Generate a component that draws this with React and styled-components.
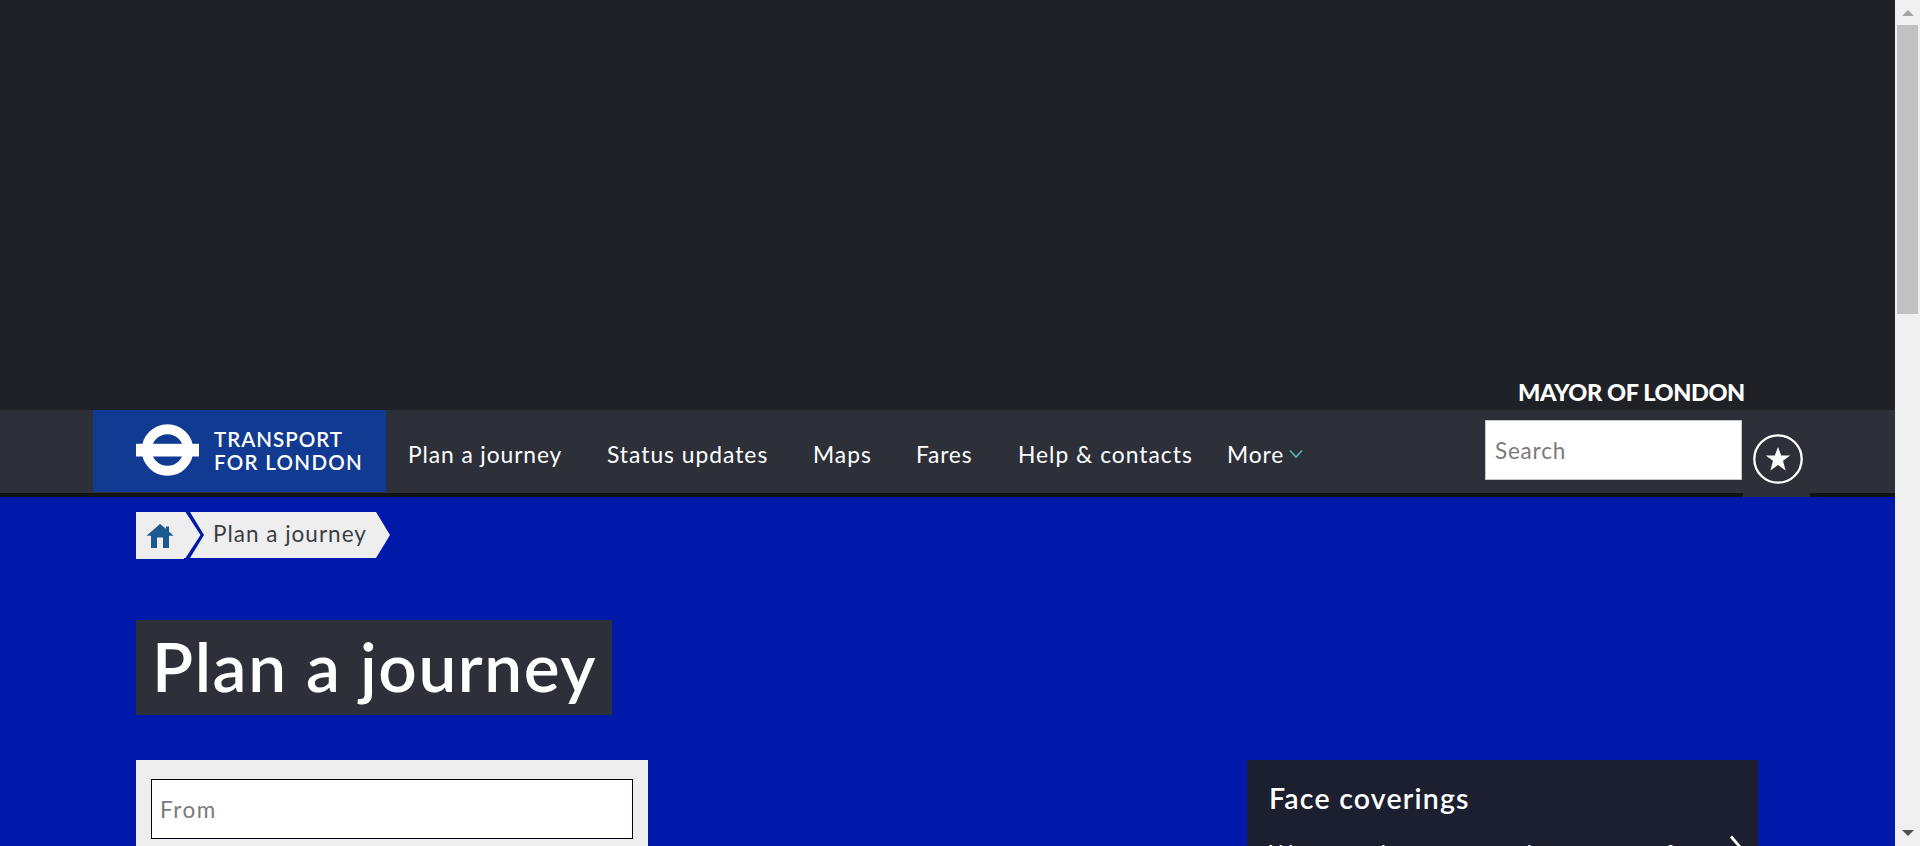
import React from 'react';
import styled, { createGlobalStyle } from 'styled-components';

const Global = createGlobalStyle`
  * { box-sizing: border-box; }
  html, body { margin: 0; height: 846px; overflow: hidden; }
  body { font-family: Lato, "Liberation Sans", sans-serif; background: #0019a8; }
`;

const Screen = styled.div`
  display: flex;
  width: 1920px;
  height: 846px;
  overflow: hidden;
`;
const Page = styled.div`
  width: 1895px;
  height: 846px;
  overflow: hidden;
  background: #0019a8;
`;
const TopArea = styled.div`
  height: 410px;
  background: #202126;
  display: flex;
  justify-content: flex-end;
  align-items: flex-end;
  padding: 0 150px 6px 0;
`;
const Mayor = styled.div`
  width: 227px;
  font-size: 23.5px;
  line-height: 24px;
  font-weight: 900;
  letter-spacing: -0.4px;
  white-space: nowrap;
  color: #fff;
`;
const Header = styled.header`
  display: flex;
  height: 87px;
  padding-left: 93px;
  background: #2d3039;
  border-bottom: 4px solid #131417;
`;
const Brand = styled.a`
  display: flex;
  width: 293px;
  height: 82px;
  padding: 14px 0 0 43px;
  gap: 15px;
  background: #113b92;
`;
const BrandName = styled.div`
  padding-top: 4px;
  color: #fff;
  font-size: 20.5px;
  line-height: 23px;
  font-weight: 600;
  white-space: nowrap;
`;
const Line = styled.span`
  display: block;
  letter-spacing: ${p => p.$track || 0}px;
`;
const Nav = styled.nav`
  display: flex;
  width: 1099px;
  padding: 30px 0 0 22px;
`;
const NavItem = styled.a`
  display: flex;
  align-items: center;
  gap: 5px;
  width: ${p => p.$width}px;
  height: 28px;
  color: #fff;
  font-size: 22.8px;
  letter-spacing: ${p => p.$track || 0}px;
  white-space: nowrap;
`;
const SearchInput = styled.input`
  width: 257px;
  height: 60px;
  margin: 10px 0 0;
  padding: 0 9px 0;
  border: 1px solid #c4c6ca;
  border-radius: 0;
  background: #fff;
  font: 400 22.5px Lato, sans-serif;
  letter-spacing: 0.8px;
  outline: none;
  &::placeholder { color: #7a7a7a; opacity: 1; }
`;
const Favourites = styled.button`
  width: 67px;
  height: 87px;
  margin-left: 1px;
  padding: 23px 0 0 9px;
  border: 0;
  background: #2d3039;
  display: flex;
  align-items: flex-start;
`;
const Main = styled.main`
  padding: 15px 137px 0 136px;
`;
const Crumbs = styled.nav`
  display: flex;
  height: 47px;
`;
const HomeCrumb = styled.a`
  display: block;
  width: 54px;
  height: 47px;
`;
const PageCrumb = styled.span`
  width: 200px;
  height: 46px;
  padding: 8px 0 0 23px;
  background: #eee;
  clip-path: polygon(0 0, 186px 0, 100% 50%, 186px 100%, 0 100%, 14px 50%);
  color: #3a3d45;
  font-size: 22.5px;
  font-weight: 400;
  line-height: 28px;
  letter-spacing: 1px;
  white-space: nowrap;
`;
const Title = styled.h1`
  width: 476px;
  height: 95px;
  margin: 61px 0 45px;
  padding: 0 0 0 16px;
  background: #2d3039;
  color: #fff;
  font-size: 67.5px;
  font-weight: 600;
  line-height: 92px;
  letter-spacing: 1.6px;
  white-space: nowrap;
`;
const Columns = styled.div`
  display: flex;
  justify-content: space-between;
`;
const Planner = styled.form`
  width: 512px;
  height: 300px;
  padding: 19px 15px 0;
  background: #eee;
`;
const FromInput = styled(SearchInput)`
  width: 482px;
  margin: 0;
  padding-left: 8px;
  border-color: #000419;
  letter-spacing: 1.5px;
`;
const Notice = styled.aside`
  width: 511px;
  height: 300px;
  padding: 21px 0 0 22px;
  background: #1c1f30;
  color: #fff;
`;
const NoticeTitle = styled.h2`
  margin: 0 0 25px;
  font-size: 28.5px;
  line-height: 34px;
  font-weight: 600;
  letter-spacing: 1.2px;
`;
const NoticeRow = styled.div`
  display: flex;
  align-items: flex-start;
  font-size: 22.5px;
  line-height: 28px;
`;
const NoticeText = styled.p`
  width: 460px;
  margin: 0;
  letter-spacing: 0.35px;
  white-space: nowrap;
`;
const Chevron = styled.svg`
  margin-top: -5px;
`;
const Scrollbar = styled.div`
  width: 25px;
  height: 846px;
  display: flex;
  flex-direction: column;
  align-items: center;
  background: #f0f0f0;
`;
const ScrollArrow = styled.div`
  height: 25px;
  padding-top: 10px;
  margin-top: ${p => p.$end ? 506 : 0}px;
  line-height: 0;
`;
const Thumb = styled.div`
  width: 21px;
  height: 289px;
  background: #c1c1c1;
`;

const Roundel = () => (
  <svg width="63" height="52" viewBox="0 0 63 52">
    <circle cx="31.5" cy="26" r="20.8" fill="none" stroke="#fff" strokeWidth="10" />
    <rect y="19.8" width="63" height="12.700" fill="#fff" />
  </svg>
);

export default function App() {
  return (
    <>
      <Global />
      <Screen>
        <Page>
          <TopArea><Mayor>MAYOR OF LONDON</Mayor></TopArea>
          <Header>
            <Brand>
              <Roundel />
              <BrandName>
                <Line $track={1}>TRANSPORT</Line>
                <Line $track={1.3}>FOR LONDON</Line>
              </BrandName>
            </Brand>
            <Nav>
              <NavItem $width={199} $track={0.9}>Plan a journey</NavItem>
              <NavItem $width={206} $track={1}>Status updates</NavItem>
              <NavItem $width={103} $track={1}>Maps</NavItem>
              <NavItem $width={102} $track={0.8}>Fares</NavItem>
              <NavItem $width={209} $track={1}>Help &amp; contacts</NavItem>
              <NavItem $width={80} $track={0.9}>
                More
                <svg width="14" height="10" viewBox="0 0 14 10"><path d="M1 1.5 7 8l6-6.5" fill="none" stroke="#56b9b9" strokeWidth="1.6" /></svg>
              </NavItem>
            </Nav>
            <SearchInput placeholder="Search" />
            <Favourites>
              <svg width="52" height="52" viewBox="0 0 52 52">
                <circle cx="26" cy="26" r="23.7" fill="none" stroke="#fff" strokeWidth="2.3" />
                <path d="M26 14l3.2 8.5 9 .1-7.2 5.2 2.6 9.7-7.6-5.6-7.6 5.6 2.6-9.7-7.2-5.2 9-.1z" fill="#fff" />
              </svg>
            </Favourites>
          </Header>
          <Main>
            <Crumbs>
              <HomeCrumb>
                <svg width="68" height="47" viewBox="0 0 68 47">
                  <path d="M0 0h49.500l15 23-15 23H48v1H0z" fill="#eee" />
                  <path d="M24 12 10.500 23.800H15V36h6V25.500h6V36h6V23.800h4.500L33 19.500V14.500h-3v2.300z" fill="#1c5a92" />
                </svg>
              </HomeCrumb>
              <PageCrumb>Plan a journey</PageCrumb>
            </Crumbs>
            <Title>Plan a journey</Title>
            <Columns>
              <Planner><FromInput placeholder="From" /></Planner>
              <Notice>
                <NoticeTitle>Face coverings</NoticeTitle>
                <NoticeRow>
                  <NoticeText>We now ask everyone to keep on your face</NoticeText>
                  <Chevron width="14" height="24" viewBox="0 0 14 24"><path d="M2 1.500l9 10.500-9 10.500" fill="none" stroke="#fff" strokeWidth="2.800" /></Chevron>
                </NoticeRow>
              </Notice>
            </Columns>
          </Main>
        </Page>
        <Scrollbar>
          <ScrollArrow><svg width="12" height="6"><path d="M6 0l6 6H0z" fill="#a3a3a3" /></svg></ScrollArrow>
          <Thumb />
          <ScrollArrow $end><svg width="12" height="6"><path d="M0 0h12L6 6z" fill="#505050" /></svg></ScrollArrow>
        </Scrollbar>
      </Screen>
    </>
  );
}
